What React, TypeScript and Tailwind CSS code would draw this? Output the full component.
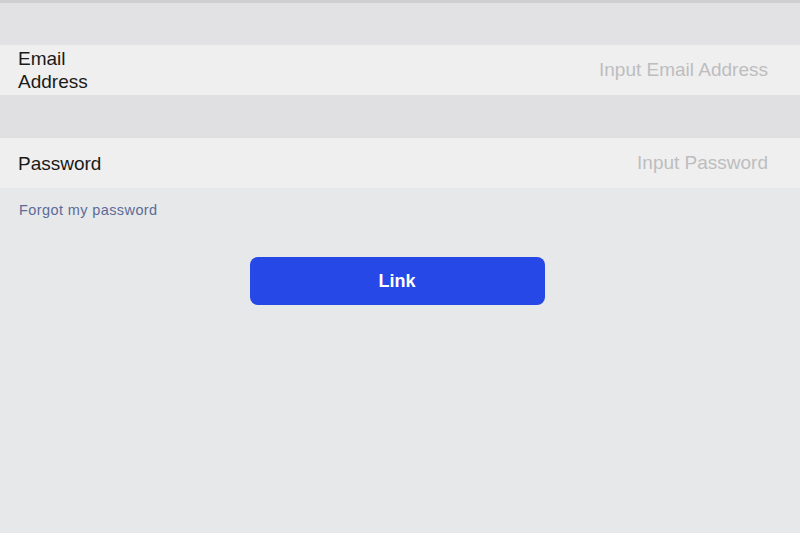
const Row = ({ label, placeholder, type = 'text' }: { label: string; placeholder: string; type?: string }) => (
  <div className="flex items-center h-[50px] bg-[#efefef] pl-[18px] pr-[32px]">
    <label className="w-[100px] shrink-0 text-[19px] leading-[23px] text-[#1a1a1a]">{label}</label>
    <input
      type={type}
      placeholder={placeholder}
      className="flex-1 bg-transparent text-right text-[19px] outline-none placeholder:text-[#bdbdc0]"
    />
  </div>
);

export default function App() {
  return (
    <div
      className="w-[800px] h-[533px] bg-[#e7e8ea] flex flex-col"
      style={{ fontFamily: '"Liberation Sans", Arial, sans-serif' }}
    >
      <div className="h-[3px] bg-[#cfcfd1]" />
      <div className="h-[42px] bg-[#e2e2e4]" />
      <Row label="Email Address" placeholder="Input Email Address" type="email" />
      <div className="h-[43px] bg-[#e0e0e2]" />
      <Row label="Password" placeholder="Input Password" type="password" />
      <div className="px-[19px] pt-[10px]">
        <a href="#" className="text-[14.5px] tracking-[0.4px] text-[#5d6b98]">
          Forgot my password
        </a>
      </div>
      <div className="flex justify-center pt-[35px] pr-[6px]">
        <button className="w-[295px] h-[48px] rounded-[8px] bg-[#2548e6] text-white text-[18px] font-bold">
          Link
        </button>
      </div>
    </div>
  );
}
